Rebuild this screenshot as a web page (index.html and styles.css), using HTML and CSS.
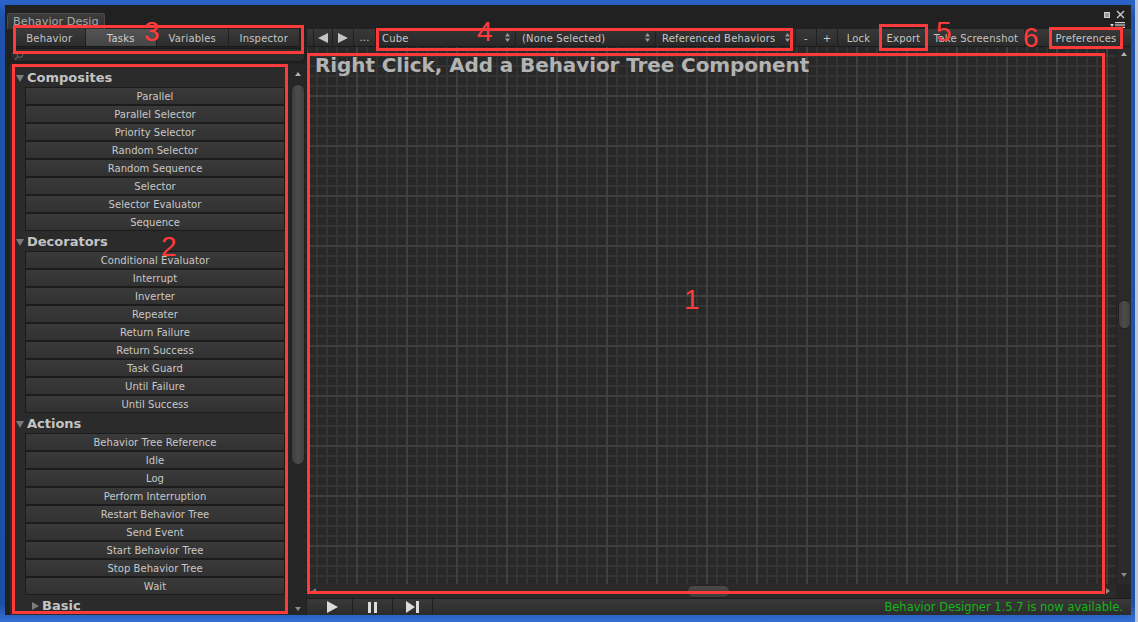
FILE: index.html
```html
<!DOCTYPE html>
<html>
<head>
<meta charset="utf-8">
<title>Behavior Designer</title>
<link rel="stylesheet" href="styles.css">
</head>
<body>
<div class="screen">
  <div class="win">
    <div class="titlebar">
      <div class="wtab">Behavior Desig</div>
      <div class="wctl">
        <div class="wctl-row">
          <svg width="6" height="6" viewBox="0 0 6 6"><rect x="0.5" y="0.5" width="5" height="5" fill="#9a9a9a" stroke="#d0d0d0"/></svg>
          <svg width="9" height="9" viewBox="0 0 9 9"><path d="M1 1L8 8M8 1L1 8" stroke="#cfcfcf" stroke-width="1.3"/></svg>
        </div>
        <svg class="ic-menu" width="15" height="6" viewBox="0 0 15 6"><polygon points="0,2 4,2 2,5" fill="#cfcfcf"/><rect x="5" y="0" width="10" height="1.2" fill="#cfcfcf"/><rect x="5" y="2.4" width="10" height="1.2" fill="#cfcfcf"/><rect x="5" y="4.8" width="10" height="1.2" fill="#cfcfcf"/></svg>
      </div>
    </div>
    <div class="panes">
      <aside class="side">
        <div class="tabs">
          <span class="tab">Behavior</span>
          <span class="tab on">Tasks</span>
          <span class="tab">Variables</span>
          <span class="tab">Inspector</span>
        </div>
        <div class="search">
          <svg width="10" height="9" viewBox="0 0 10 9"><circle cx="6" cy="3.5" r="2.8" fill="none" stroke="#5c5c5c" stroke-width="1.2"/><path d="M4 5.5L1 8.5" stroke="#5c5c5c" stroke-width="1.6"/></svg>
        </div>
        <div class="listwrap">
          <div class="list">
            <div class="cat"><svg width="8" height="8" viewBox="0 0 8 8"><polygon points="0,1 8,1 4,8" fill="#7b7b7b"/></svg>Composites</div>
            <div class="task">Parallel</div>
            <div class="task">Parallel Selector</div>
            <div class="task">Priority Selector</div>
            <div class="task">Random Selector</div>
            <div class="task">Random Sequence</div>
            <div class="task">Selector</div>
            <div class="task">Selector Evaluator</div>
            <div class="task">Sequence</div>
            <div class="cat"><svg width="8" height="8" viewBox="0 0 8 8"><polygon points="0,1 8,1 4,8" fill="#7b7b7b"/></svg>Decorators</div>
            <div class="task">Conditional Evaluator</div>
            <div class="task">Interrupt</div>
            <div class="task">Inverter</div>
            <div class="task">Repeater</div>
            <div class="task">Return Failure</div>
            <div class="task">Return Success</div>
            <div class="task">Task Guard</div>
            <div class="task">Until Failure</div>
            <div class="task">Until Success</div>
            <div class="cat"><svg width="8" height="8" viewBox="0 0 8 8"><polygon points="0,1 8,1 4,8" fill="#7b7b7b"/></svg>Actions</div>
            <div class="task">Behavior Tree Reference</div>
            <div class="task">Idle</div>
            <div class="task">Log</div>
            <div class="task">Perform Interruption</div>
            <div class="task">Restart Behavior Tree</div>
            <div class="task">Send Event</div>
            <div class="task">Start Behavior Tree</div>
            <div class="task">Stop Behavior Tree</div>
            <div class="task">Wait</div>
            <div class="cat closed"><svg width="8" height="8" viewBox="0 0 8 8"><polygon points="1,0 8,4 1,8" fill="#7b7b7b"/></svg>Basic</div>
          </div>
          <div class="vsb">
            <svg class="arr-up" width="6" height="4" viewBox="0 0 6 4"><polygon points="0,4 6,4 3,0" fill="#b0b0b0"/></svg>
            <div class="thumb-v"></div>
            <svg class="arr-dn" width="6" height="4" viewBox="0 0 6 4"><polygon points="0,0 6,0 3,4" fill="#8a8a8a"/></svg>
          </div>
        </div>
      </aside>
      <section class="main">
        <div class="toolbar">
          <span class="tb tb-back"><svg width="10" height="10" viewBox="0 0 10 10"><polygon points="10,0 10,10 0,5" fill="#c4c4c4"/></svg></span>
          <span class="tb tb-fwd"><svg width="10" height="10" viewBox="0 0 10 10"><polygon points="0,0 0,10 10,5" fill="#c4c4c4"/></svg></span>
          <span class="tb tb-more">...</span>
          <span class="tb dd">Cube<svg width="5" height="9" viewBox="0 0 5 9"><polygon points="0,3.5 5,3.5 2.5,0" fill="#9c9c9c"/><polygon points="0,5.5 5,5.5 2.5,9" fill="#9c9c9c"/></svg></span>
          <span class="tb dd">(None Selected)<svg width="5" height="9" viewBox="0 0 5 9"><polygon points="0,3.5 5,3.5 2.5,0" fill="#9c9c9c"/><polygon points="0,5.5 5,5.5 2.5,9" fill="#9c9c9c"/></svg></span>
          <span class="tb dd">Referenced Behaviors<svg width="5" height="9" viewBox="0 0 5 9"><polygon points="0,3.5 5,3.5 2.5,0" fill="#9c9c9c"/><polygon points="0,5.5 5,5.5 2.5,9" fill="#9c9c9c"/></svg></span>
          <span class="tb tb-pm">-</span>
          <span class="tb tb-pm">+</span>
          <span class="tb tb-lock">Lock</span>
          <span class="tb tb-export">Export</span>
          <span class="tb tb-shot">Take Screenshot</span>
          <span class="tb-fill"></span>
          <span class="tb tb-pref">Preferences</span>
        </div>
        <div class="view">
          <div class="viewrow">
            <div class="canvas">
              <div class="hint">Right Click, Add a Behavior Tree Component</div>
            </div>
            <div class="vsb2">
              <svg class="arr-up2" width="6" height="4" viewBox="0 0 6 4"><polygon points="0,4 6,4 3,0" fill="#b0b0b0"/></svg>
              <div class="thumb-v2"></div>
              <svg class="arr-dn2" width="6" height="4" viewBox="0 0 6 4"><polygon points="0,0 6,0 3,4" fill="#8a8a8a"/></svg>
            </div>
          </div>
          <div class="hrow">
            <div class="hsb">
              <svg class="arr-l" width="4" height="6" viewBox="0 0 4 6"><polygon points="4,0 4,6 0,3" fill="#7a7a7a"/></svg>
              <div class="thumb-h"></div>
              <svg class="arr-r" width="4" height="6" viewBox="0 0 4 6"><polygon points="0,0 0,6 4,3" fill="#8a8a8a"/></svg>
            </div>
            <div class="corner"></div>
          </div>
        </div>
        <div class="playbar">
          <span class="pb"><svg width="11" height="12" viewBox="0 0 11 12"><polygon points="0,0 11,6 0,12" fill="#dcdcdc"/></svg></span>
          <span class="pb"><svg width="9" height="11" viewBox="0 0 9 11"><rect x="0" y="0" width="3" height="11" fill="#dcdcdc"/><rect x="6" y="0" width="3" height="11" fill="#dcdcdc"/></svg></span>
          <span class="pb"><svg width="13" height="12" viewBox="0 0 13 12"><polygon points="0,0 9,6 0,12" fill="#dcdcdc"/><rect x="10" y="0" width="3" height="12" fill="#dcdcdc"/></svg></span>
          <span class="status">Behavior Designer 1.5.7 is now available.</span>
        </div>
      </section>
    </div>
  </div>

  <div class="notes">
    <div class="rb rb1"></div>
    <div class="rb rb2"></div>
    <div class="rb rb3"></div>
    <div class="rb rb4"></div>
    <div class="rb rb5"></div>
    <div class="rb rb6"></div>
    <span class="dg dg1">1</span>
    <span class="dg dg2">2</span>
    <span class="dg dg3">3</span>
    <span class="dg dg4">4</span>
    <span class="dg dg5">5</span>
    <span class="dg dg6">6</span>
  </div>
</div>
</body>
</html>
```
FILE: styles.css
```css
* { box-sizing: border-box; margin: 0; padding: 0; }
html, body { width: 1138px; height: 622px; overflow: hidden; }
body { font-family: "DejaVu Sans", sans-serif; background: #1a50ab; }

.screen {
  position: relative;
  width: 1138px;
  height: 622px;
  padding: 5px 4px 7px 5px;
  border-right: 3px solid #b9c4d4;
  background: linear-gradient(to bottom, #2b64c8 0, #1e52ad 3%, #1b4ea6 97%, #3571d2 100%);
}

.win {
  width: 1126px;
  height: 610px;
  background: #212121;
  display: flex;
  flex-direction: column;
}

/* title bar */
.titlebar {
  height: 24px;
  display: flex;
  align-items: flex-end;
  padding-left: 2px;
}
.wtab {
  width: 98px;
  height: 16px;
  padding: 0 5px;
  font-size: 11.3px;
  line-height: 15px;
  color: #a8a8a8;
  background: linear-gradient(#3c3c3c, #333);
  border: 1px solid #4b4b4b;
  border-bottom: none;
  border-radius: 3px 3px 0 0;
  white-space: nowrap;
  overflow: hidden;
}
.wctl {
  margin-left: auto;
  align-self: stretch;
  display: flex;
  flex-direction: column;
  align-items: flex-end;
  padding: 5px 6px 0 0;
  gap: 3px;
}
.wctl-row { display: flex; align-items: center; gap: 6px; }

/* panes */
.panes { flex: 1; display: flex; min-height: 0; }

.side {
  width: 302px;
  display: flex;
  flex-direction: column;
}
.tabs {
  height: 18px;
  width: 286px;
  margin-left: 9px;
  display: flex;
}
.tab {
  flex: 1;
  font-size: 10px;
  line-height: 19px;
  text-align: center;
  color: #c6c6c6;
  background: linear-gradient(#3b3b3b, #2c2c2c);
  border-right: 1px solid #1f1f1f;
  border-bottom: 1px solid #191919;
  letter-spacing: 0.2px;
}
.tab.on { background: linear-gradient(#545454, #454545); color: #d0d0d0; }

.search {
  height: 14px;
  margin: 1px 1px 0 5px;
  border-radius: 7px;
  background: #2c2c2c;
  border: 1px solid #1a1a1a;
  display: flex;
  align-items: center;
  padding-left: 3px;
}

.listwrap {
  flex: 1;
  margin: 2px 1px 0 5px;
  display: flex;
  min-height: 0;
}
.list {
  flex: 1;
  background: #2b2b2b;
  padding-top: 3px;
  overflow: hidden;
}
.cat {
  height: 20px;
  display: flex;
  align-items: center;
  gap: 3px;
  padding-left: 6px;
  font-size: 13px;
  font-weight: bold;
  color: #c4c4c4;
}
.cat svg { margin-top: 1px; }
.cat.closed { padding-left: 21px; gap: 3px; }
.task {
  height: 18px;
  margin: 0 3px 0 15px;
  font-size: 10px;
  line-height: 17px;
  text-align: center;
  color: #c8c8c8;
  background: linear-gradient(#3a3a3a, #313131);
  border: 1px solid #1c1c1c;
  white-space: nowrap;
  letter-spacing: 0.05px;
}

.vsb {
  width: 18px;
  background: #262626;
  display: flex;
  flex-direction: column;
  align-items: center;
}
.arr-up { margin-top: 8px; margin-left: 1px; }
.thumb-v {
  width: 14px;
  height: 381px;
  margin-top: 8px;
  margin-left: 2px;
  border-radius: 7px;
  background: linear-gradient(to right, #3e3e3e, #4c4c4c 50%, #404040);
  border: 1px solid #222;
}
.arr-dn { margin-top: auto; margin-bottom: 4px; margin-left: 1px; }

/* main */
.main { flex: 1; display: flex; flex-direction: column; min-width: 0; }
.toolbar {
  height: 18px;
  display: flex;
  padding-left: 6px;
  background: linear-gradient(#393939, #2b2b2b);
  border-bottom: 1px solid #1b1b1b;
}
.tb {
  display: flex;
  align-items: center;
  justify-content: center;
  padding-top: 2px;
  font-size: 10px;
  color: #c6c6c6;
  border-right: 1px solid #202020;
  white-space: nowrap;
  letter-spacing: 0.2px;
}
.tb-back, .tb-fwd { padding-top: 0; }
.tb-back { width: 20px; border-left: 1px solid #202020; }
.tb-fwd { width: 21px; }
.tb-more { width: 22px; padding-top: 0; padding-bottom: 1px; }
.tb.dd {
  width: 140px;
  justify-content: space-between;
  padding: 2px 5px 0 6px;
  background: linear-gradient(#343434, #282828);
}
.tb.dd svg { margin-top: -2px; }
.tb-pm { width: 21px; }
.tb-lock { width: 42px; }
.tb-export { width: 48px; }
.tb-shot { width: 97px; }
.tb-fill { flex: 1; }
.tb-pref { width: 74px; border-left: 1px solid #202020; margin-right: 8px; }

.view { flex: 1; display: flex; flex-direction: column; min-height: 0; }
.viewrow { flex: 1; display: flex; min-height: 0; }
.canvas {
  flex: 1;
  background-color: #282828;
  background-image:
    linear-gradient(to right, #3f3f3f 2px, transparent 2px),
    linear-gradient(to bottom, #3f3f3f 2px, transparent 2px),
    linear-gradient(to right, #343434 2px, transparent 2px),
    linear-gradient(to bottom, #343434 2px, transparent 2px);
  background-size: 50px 50px, 50px 50px, 10px 10px, 10px 10px;
  background-position: -1px -2px, -1px -2px, -1px -2px, -1px -2px;
  padding: 6px 0 0 8px;
}
.hint {
  font-size: 20px;
  line-height: 24px;
  font-weight: bold;
  color: #b3b3b3;
  white-space: nowrap;
  letter-spacing: -0.1px;
}
.vsb2 {
  width: 15px;
  background: #2a2a2a;
  border-left: 1px solid #222;
  display: flex;
  flex-direction: column;
  align-items: center;
}
.arr-up2 { margin-top: 5px; }
.thumb-v2 {
  width: 13px;
  height: 29px;
  margin-top: 244px;
  border-radius: 6px;
  background: linear-gradient(to right, #3e3e3e, #4c4c4c 50%, #404040);
  border: 1px solid #232323;
}
.arr-dn2 { margin-top: auto; margin-bottom: 7px; }

.hrow { height: 14px; display: flex; }
.hsb {
  flex: 1;
  background: #2a2a2a;
  display: flex;
  align-items: center;
}
.arr-l { margin-left: 5px; }
.thumb-h {
  width: 43px;
  height: 13px;
  margin-left: 371px;
  border-radius: 6px;
  background: linear-gradient(#4a4a4a, #3c3c3c);
  border: 1px solid #232323;
}
.arr-r { margin-left: auto; margin-right: 6px; }
.corner { width: 15px; background: #252525; }

.playbar {
  height: 17px;
  display: flex;
  align-items: stretch;
  padding-left: 6px;
  background: linear-gradient(#393939, #2c2c2c);
  border-top: 1px solid #1c1c1c;
}
.pb {
  width: 40px;
  display: flex;
  align-items: center;
  justify-content: center;
  border-right: 1px solid #202020;
}
.status {
  margin-left: auto;
  padding-right: 8px;
  font-size: 11.5px;
  line-height: 17px;
  color: #16b416;
  white-space: nowrap;
}

/* annotation overlay */
.notes {
  position: absolute;
  left: 0;
  top: 0;
  width: 1138px;
  height: 622px;
  pointer-events: none;
}
.rb { position: absolute; border: 3px solid #ff3a3a; }
.rb1 { left: 307px; top: 53px; width: 798px; height: 541px; }
.rb2 { left: 12px; top: 64px; width: 276px; height: 550px; }
.rb3 { left: 13px; top: 25px; width: 291px; height: 29px; }
.rb4 { left: 376px; top: 28px; width: 417px; height: 23px; }
.rb5 { left: 879px; top: 24px; width: 49px; height: 27px; }
.rb6 { left: 1049px; top: 27px; width: 74px; height: 22px; }

.dg {
  position: absolute;
  font-family: "Liberation Sans", Arial, sans-serif;
  font-size: 28px;
  line-height: 28px;
  color: #ff3a3a;
}
.dg1 { left: 684px; top: 286px; }
.dg2 { left: 161px; top: 233px; }
.dg3 { left: 144px; top: 18px; }
.dg4 { left: 477px; top: 18px; }
.dg5 { left: 936px; top: 18px; }
.dg6 { left: 1023px; top: 24px; }
```
